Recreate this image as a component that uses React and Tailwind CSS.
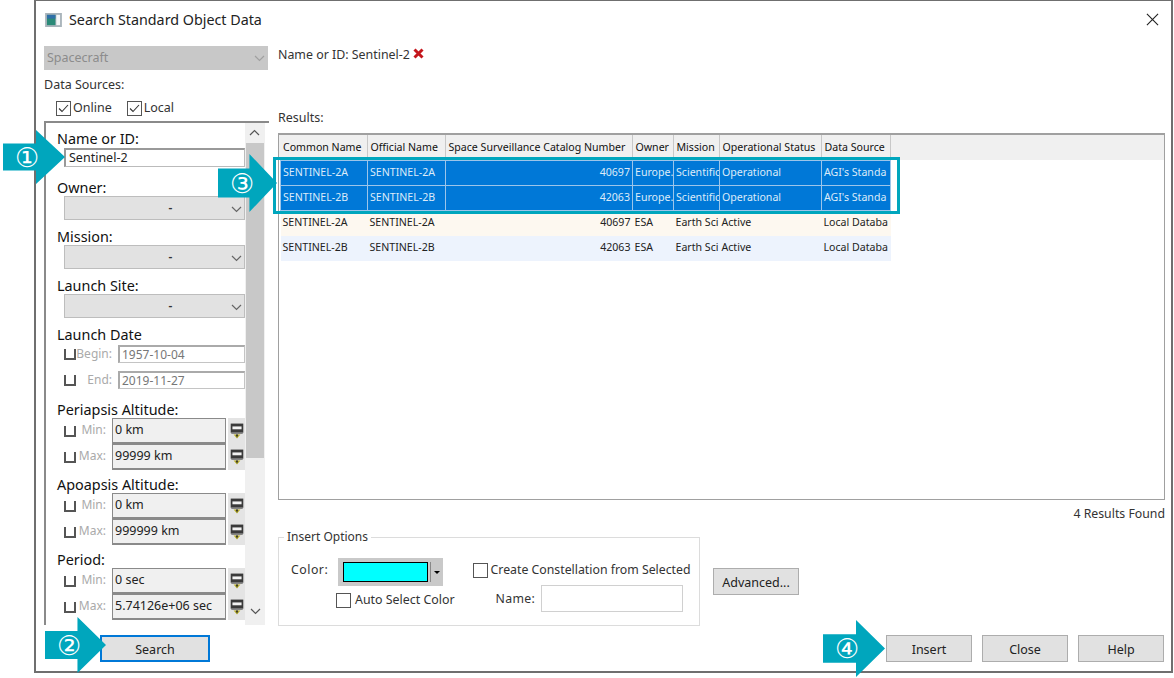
import React from 'react';

const columns = [
  { name: 'Common Name', width: 'w-[87px]' },
  { name: 'Official Name', width: 'w-[78px]' },
  { name: 'Space Surveillance Catalog Number', width: 'w-[187px]' },
  { name: 'Owner', width: 'w-[41px]' },
  { name: 'Mission', width: 'w-[46px]' },
  { name: 'Operational Status', width: 'w-[102px]' },
  { name: 'Data Source', width: 'w-[69px]' },
];

const rows = [
  { cells: ['SENTINEL-2A', 'SENTINEL-2A', '40697', 'Europe.', 'Scientific', 'Operational', "AGI's Standa"], selected: true },
  { cells: ['SENTINEL-2B', 'SENTINEL-2B', '42063', 'Europe.', 'Scientific', 'Operational', "AGI's Standa"], selected: true },
  { cells: ['SENTINEL-2A', 'SENTINEL-2A', '40697', 'ESA', 'Earth Sci', 'Active', 'Local Databa'], bg: 'bg-[#fdf8f0]' },
  { cells: ['SENTINEL-2B', 'SENTINEL-2B', '42063', 'ESA', 'Earth Sci', 'Active', 'Local Databa'], bg: 'bg-[#edf3fd]' },
];

function Chevron({ color = '#555' }) {
  return (
    <svg width="11" height="7" viewBox="0 0 11 7" fill="none" stroke={color} strokeWidth="1.2">
      <path d="M1 1l4.5 4.5L10 1" />
    </svg>
  );
}

function Arrow({ className, digit }) {
  return (
    <div className={`absolute ${className}`}>
      <svg className="w-full h-full" viewBox="0 0 62 56" preserveAspectRatio="none">
        <polygon points="0,14 33,14 33,0 62,28 33,56 33,42 0,42" fill="#00a6bd" />
      </svg>
      <span className="absolute left-[9px] top-0 bottom-0 w-[30px] flex items-center justify-center text-white text-[27px] leading-none font-['DejaVu_Sans',sans-serif]">
        {digit}
      </span>
    </div>
  );
}

function Check({ checked, className = '' }) {
  return (
    <span className={`flex items-center justify-center shrink-0 w-[15px] h-[15px] border border-[#555] bg-white ${className}`}>
      {checked && (
        <svg width="11" height="9" viewBox="0 0 11 9" fill="none" stroke="#333" strokeWidth="1.1">
          <path d="M1 4.5l3 3L10 1" />
        </svg>
      )}
    </span>
  );
}

// half open box used for the disabled filters
function OpenCheck() {
  return <span className="w-[12px] h-[11px] border-l-2 border-r-2 border-b-2 border-[#555] shrink-0" />;
}

function Label({ children, className = '' }) {
  return <div className={`ml-[11px] h-[19px] text-[14.4px] leading-[21px] text-[#111] whitespace-nowrap ${className}`}>{children}</div>;
}

function Combo({ className = '' }) {
  return (
    <div className={`relative ml-[18px] h-[24px] pl-[32px] bg-[#e2e2e2] border border-[#bdbdbd] flex items-center justify-center text-[12px] font-semibold text-[#333] ${className}`}>
      -
      <span className="absolute right-[2px] top-[9px] flex">
        <Chevron color="#666" />
      </span>
    </div>
  );
}

function DateRow({ name, value, className = '' }) {
  return (
    <div className={`flex items-center ml-[18px] h-[18px] ${className}`}>
      <OpenCheck />
      <span className="w-[36px] text-right text-[12px] text-[#aaa] shrink-0">{name}</span>
      <span className="ml-[6px] flex-1 h-full border border-[#c4c4c4] border-l-2 border-t-2 border-l-[#aaa] border-t-[#aaa] text-[12px] leading-[15px] pl-[2px] text-[#777] whitespace-nowrap">{value}</span>
    </div>
  );
}

function SpinIcon() {
  return (
    <svg width="14" height="16" viewBox="0 0 12 14">
      <rect x="0.5" y="0.5" width="11" height="8" fill="#3a3a3a" />
      <rect x="2" y="3" width="8" height="2.5" fill="#f2f2f2" />
      <rect x="1" y="8" width="10" height="1.5" fill="#777" />
      <path d="M3 10h6l-3 3.5z" fill="#b9b02c" />
      <path d="M5 10h2l-1 3z" fill="#222" />
    </svg>
  );
}

function RangeRow({ name, value }) {
  return (
    <div className="flex items-center ml-[18px] h-[26px]">
      <OpenCheck />
      <span className="w-[30px] pb-[2px] text-right text-[12px] text-[#aaa] shrink-0">{name}</span>
      <span className="ml-[6px] w-[114px] h-full bg-[#f0f0f0] border border-[#8a8a8a] border-b-2 text-[12.5px] leading-[22px] pl-[2px] text-[#222] whitespace-nowrap">{value}</span>
      <span className="ml-[2px] flex-1 h-full bg-[#e4e4e4] flex items-center justify-center">
        <SpinIcon />
      </span>
    </div>
  );
}

function Button({ children, className = '' }) {
  return (
    <button className={`h-[27px] w-[86px] pt-[3px] bg-[#e1e1e1] border border-[#adadad] text-[12.5px] text-[#222] ${className}`}>
      {children}
    </button>
  );
}

export default function App() {
  return (
    <div className="relative w-[1174px] h-[678px] bg-white overflow-hidden font-['Noto_Sans',sans-serif]">
      <div className="ml-[34px] mr-[1px] h-[673px] bg-white border-2 border-t-[1px] border-[#6f6f6f] flex flex-col">
        {/* title bar */}
        <div className="h-[45px] shrink-0 flex items-start pt-[10px] pl-[9px] pr-[12px]">
          <svg width="17" height="14" viewBox="0 0 18 15" className="mt-[2px]">
            <rect width="18" height="15" fill="#a9b4bb" />
            <rect x="2" y="2" width="9" height="11" fill="#2a8a78" />
            <rect x="2" y="2" width="9" height="4" fill="#2f6fa8" />
            <rect x="12" y="2" width="4" height="11" fill="#f4f6f7" />
          </svg>
          <span className="ml-[7px] text-[14.3px] leading-[18px] text-[#222]">Search Standard Object Data</span>
          <svg width="13" height="13" viewBox="0 0 14 14" className="ml-auto mt-[2px]" stroke="#222" strokeWidth="1.2">
            <path d="M1 1l12 12M13 1L1 13" />
          </svg>
        </div>

        <div className="flex flex-1 min-h-0">
          {/* search filters */}
          <div className="ml-[8px] w-[225px] shrink-0">
            <div className="w-[224px] h-[24px] pt-[1px] bg-[#c8c8c8] flex items-center justify-between pl-[3px] pr-[3px] text-[12.5px] text-[#8c8c8c]">
              Spacecraft
              <Chevron color="#a0a0a0" />
            </div>
            <div className="mt-[6px] h-[18px] text-[12.5px] leading-[18px] text-[#333]">Data Sources:</div>
            <div className="mt-[5px] h-[18px] flex items-center ml-[12px] text-[12.5px] text-[#333]">
              <Check checked />
              <span className="ml-[2px]">Online</span>
              <Check checked className="ml-[15px]" />
              <span className="ml-[2px]">Local</span>
            </div>
            <div className="mt-[4px] h-[504px] flex border-l-2 border-t-2 border-[#8a8a8a]">
              <div className="w-[199px] shrink-0 pt-[5px] overflow-hidden">
                <div className="ml-[11px] h-[20px] text-[14.4px] leading-[22px] text-[#111]">Name or ID:</div>
                <div className="ml-[18px] h-[19px] bg-white border border-[#bbb] border-t-2 border-l-2 border-t-[#999] border-l-[#999] text-[12.5px] leading-[16px] pl-[3px] text-[#222]">Sentinel-2</div>
                <Label className="mt-[10px]">Owner:</Label>
                <Combo />
                <Label className="mt-[6px]">Mission:</Label>
                <Combo />
                <Label className="mt-[6px]">Launch Site:</Label>
                <Combo />
                <Label className="mt-[6px]">Launch Date</Label>
                <DateRow name="Begin:" value="1957-10-04" className="mt-[2px]" />
                <DateRow name="End:" value="2019-11-27" className="mt-[8px]" />
                <Label className="mt-[10px]">Periapsis Altitude:</Label>
                <RangeRow name="Min:" value="0 km" />
                <RangeRow name="Max:" value="99999 km" />
                <Label className="mt-[4px]">Apoapsis Altitude:</Label>
                <RangeRow name="Min:" value="0 km" />
                <RangeRow name="Max:" value="999999 km" />
                <Label className="mt-[4px]">Period:</Label>
                <RangeRow name="Min:" value="0 sec" />
                <RangeRow name="Max:" value="5.74126e+06 sec" />
              </div>
              {/* scrollbar */}
              <div className="w-[20px] shrink-0 bg-[#f0f0f0] flex flex-col">
                <div className="h-[20px] flex items-center justify-center rotate-180">
                  <Chevron />
                </div>
                <div className="h-[315px] bg-[#c8c8c8] mx-[1px]" />
                <div className="mt-auto h-[20px] mb-[4px] flex items-center justify-center">
                  <Chevron />
                </div>
              </div>
            </div>
            <button className="mt-[10px] ml-[56px] w-[110px] h-[27px] pt-[3px] bg-[#e1e1e1] border-2 border-[#0078d7] text-[12.5px] text-[#222]">Search</button>
          </div>

          {/* results */}
          <div className="ml-[9px] w-[887px] shrink-0">
            <div className="h-[18px] flex items-center text-[12.4px] text-[#333]">
              Name or ID: Sentinel-2
              <svg width="11" height="11" viewBox="0 0 11 11" className="ml-[3px] -mt-[3px]" stroke="#c4161c" strokeWidth="3">
                <path d="M1.5 1.5l8 8M9.5 1.5l-8 8" />
              </svg>
            </div>
            <div className="mt-[46px] h-[16px] flex items-center text-[12.5px] text-[#333]">Results:</div>
            <div className="mt-[7px] h-[367px] border border-[#a0a0a0] border-t-2 bg-white pl-[1px] overflow-hidden">
              <div className="-ml-[1px] pl-[1px] bg-[#f0f0f0]">
                <table className="table-fixed border-collapse w-[610px] text-[10.6px] leading-none">
                  <thead>
                    <tr className="h-[25px]">
                      {columns.map((col) => (
                        <th key={col.name} className={`${col.width} font-normal text-left px-[3px] pb-[1px] whitespace-nowrap overflow-hidden border-r border-[#c8c8c8] text-[#111]`}>
                          {col.name}
                        </th>
                      ))}
                    </tr>
                  </thead>
                </table>
              </div>
              <table className="table-fixed border-collapse w-[610px] text-[10.6px] leading-none">
                <colgroup>
                  {columns.map((col) => (
                    <col key={col.name} className={col.width} />
                  ))}
                </colgroup>
                <tbody>
                  {rows.map((row, i) => (
                    <tr key={i} className={`h-[25px] ${row.selected ? 'bg-[#0078d7] text-[#dcebf9]' : `${row.bg} text-[#222]`}`}>
                      {row.cells.map((cell, j) => (
                        <td
                          key={j}
                          className={`px-[2px] pb-[2px] whitespace-nowrap overflow-hidden ${j === 2 ? 'text-right' : 'text-left'} ${row.selected ? 'border border-[#9cc5ea]' : ''}`}
                        >
                          {cell}
                        </td>
                      ))}
                    </tr>
                  ))}
                </tbody>
              </table>
            </div>
            <div className="mt-[6px] h-[16px] text-right text-[12.3px] leading-[16px] text-[#333]">4 Results Found</div>

            <div className="mt-[15px] flex items-start">
              {/* insert options */}
              <div className="relative w-[422px] h-[89px] border border-[#dcdcdc] flex">
                <span className="absolute left-[5px] -top-[9px] bg-white px-[3px] text-[12px] leading-[16px] text-[#333]">Insert Options</span>
                <div className="ml-[12px] mt-[20px]">
                  <div className="flex items-center h-[28px]">
                    <span className="w-[47px] pb-[3px] text-[12.3px] tracking-[0.5px] text-[#333]">Color:</span>
                    <div className="w-[105px] h-[28px] bg-[#c9c9c9] flex items-center pl-[5px]">
                      <span className="w-[85px] h-[20px] bg-[#00ffff] border border-black" />
                      <span className="ml-[2px] w-[1px] h-[20px] bg-[#888]" />
                      <span className="ml-[3px] border-x-[3px] border-t-[3px] border-x-transparent border-t-black" />
                    </div>
                  </div>
                  <div className="flex items-center mt-[5px] ml-[45px] text-[12.4px] text-[#333] whitespace-nowrap">
                    <Check />
                    <span className="ml-[4px]">Auto Select Color</span>
                  </div>
                </div>
                <div className="ml-[18px] mt-[23px]">
                  <div className="flex items-center text-[12.3px] text-[#333] whitespace-nowrap">
                    <Check />
                    <span className="ml-[3px]">Create Constellation from Selected</span>
                  </div>
                  <div className="flex items-center mt-[6px] ml-[23px]">
                    <span className="w-[45px] text-[12.3px] tracking-[0.3px] text-[#333]">Name:</span>
                    <span className="w-[142px] h-[27px] border border-[#d0d0d0]" />
                  </div>
                </div>
              </div>
              <Button className="ml-[13px] mt-[31px]">Advanced...</Button>
            </div>

            <div className="mt-[9px] flex justify-end gap-[10px] pr-[1px]">
              <Button>Insert</Button>
              <Button>Close</Button>
              <Button>Help</Button>
            </div>
          </div>
        </div>
      </div>

      {/* callouts and highlight drawn over the dialog */}
      <div className="absolute left-[273px] top-[157px] w-[627px] h-[57px] border-[3px] border-[#00a6bd]" />
      <Arrow className="left-[3px] top-[130px] w-[62px] h-[54px]" digit="①" />
      <Arrow className="left-[45px] top-[617px] w-[61px] h-[56px]" digit="②" />
      <Arrow className="left-[218px] top-[154px] w-[59px] h-[58px]" digit="③" />
      <Arrow className="left-[823px] top-[620px] w-[62px] h-[57px]" digit="④" />
    </div>
  );
}
